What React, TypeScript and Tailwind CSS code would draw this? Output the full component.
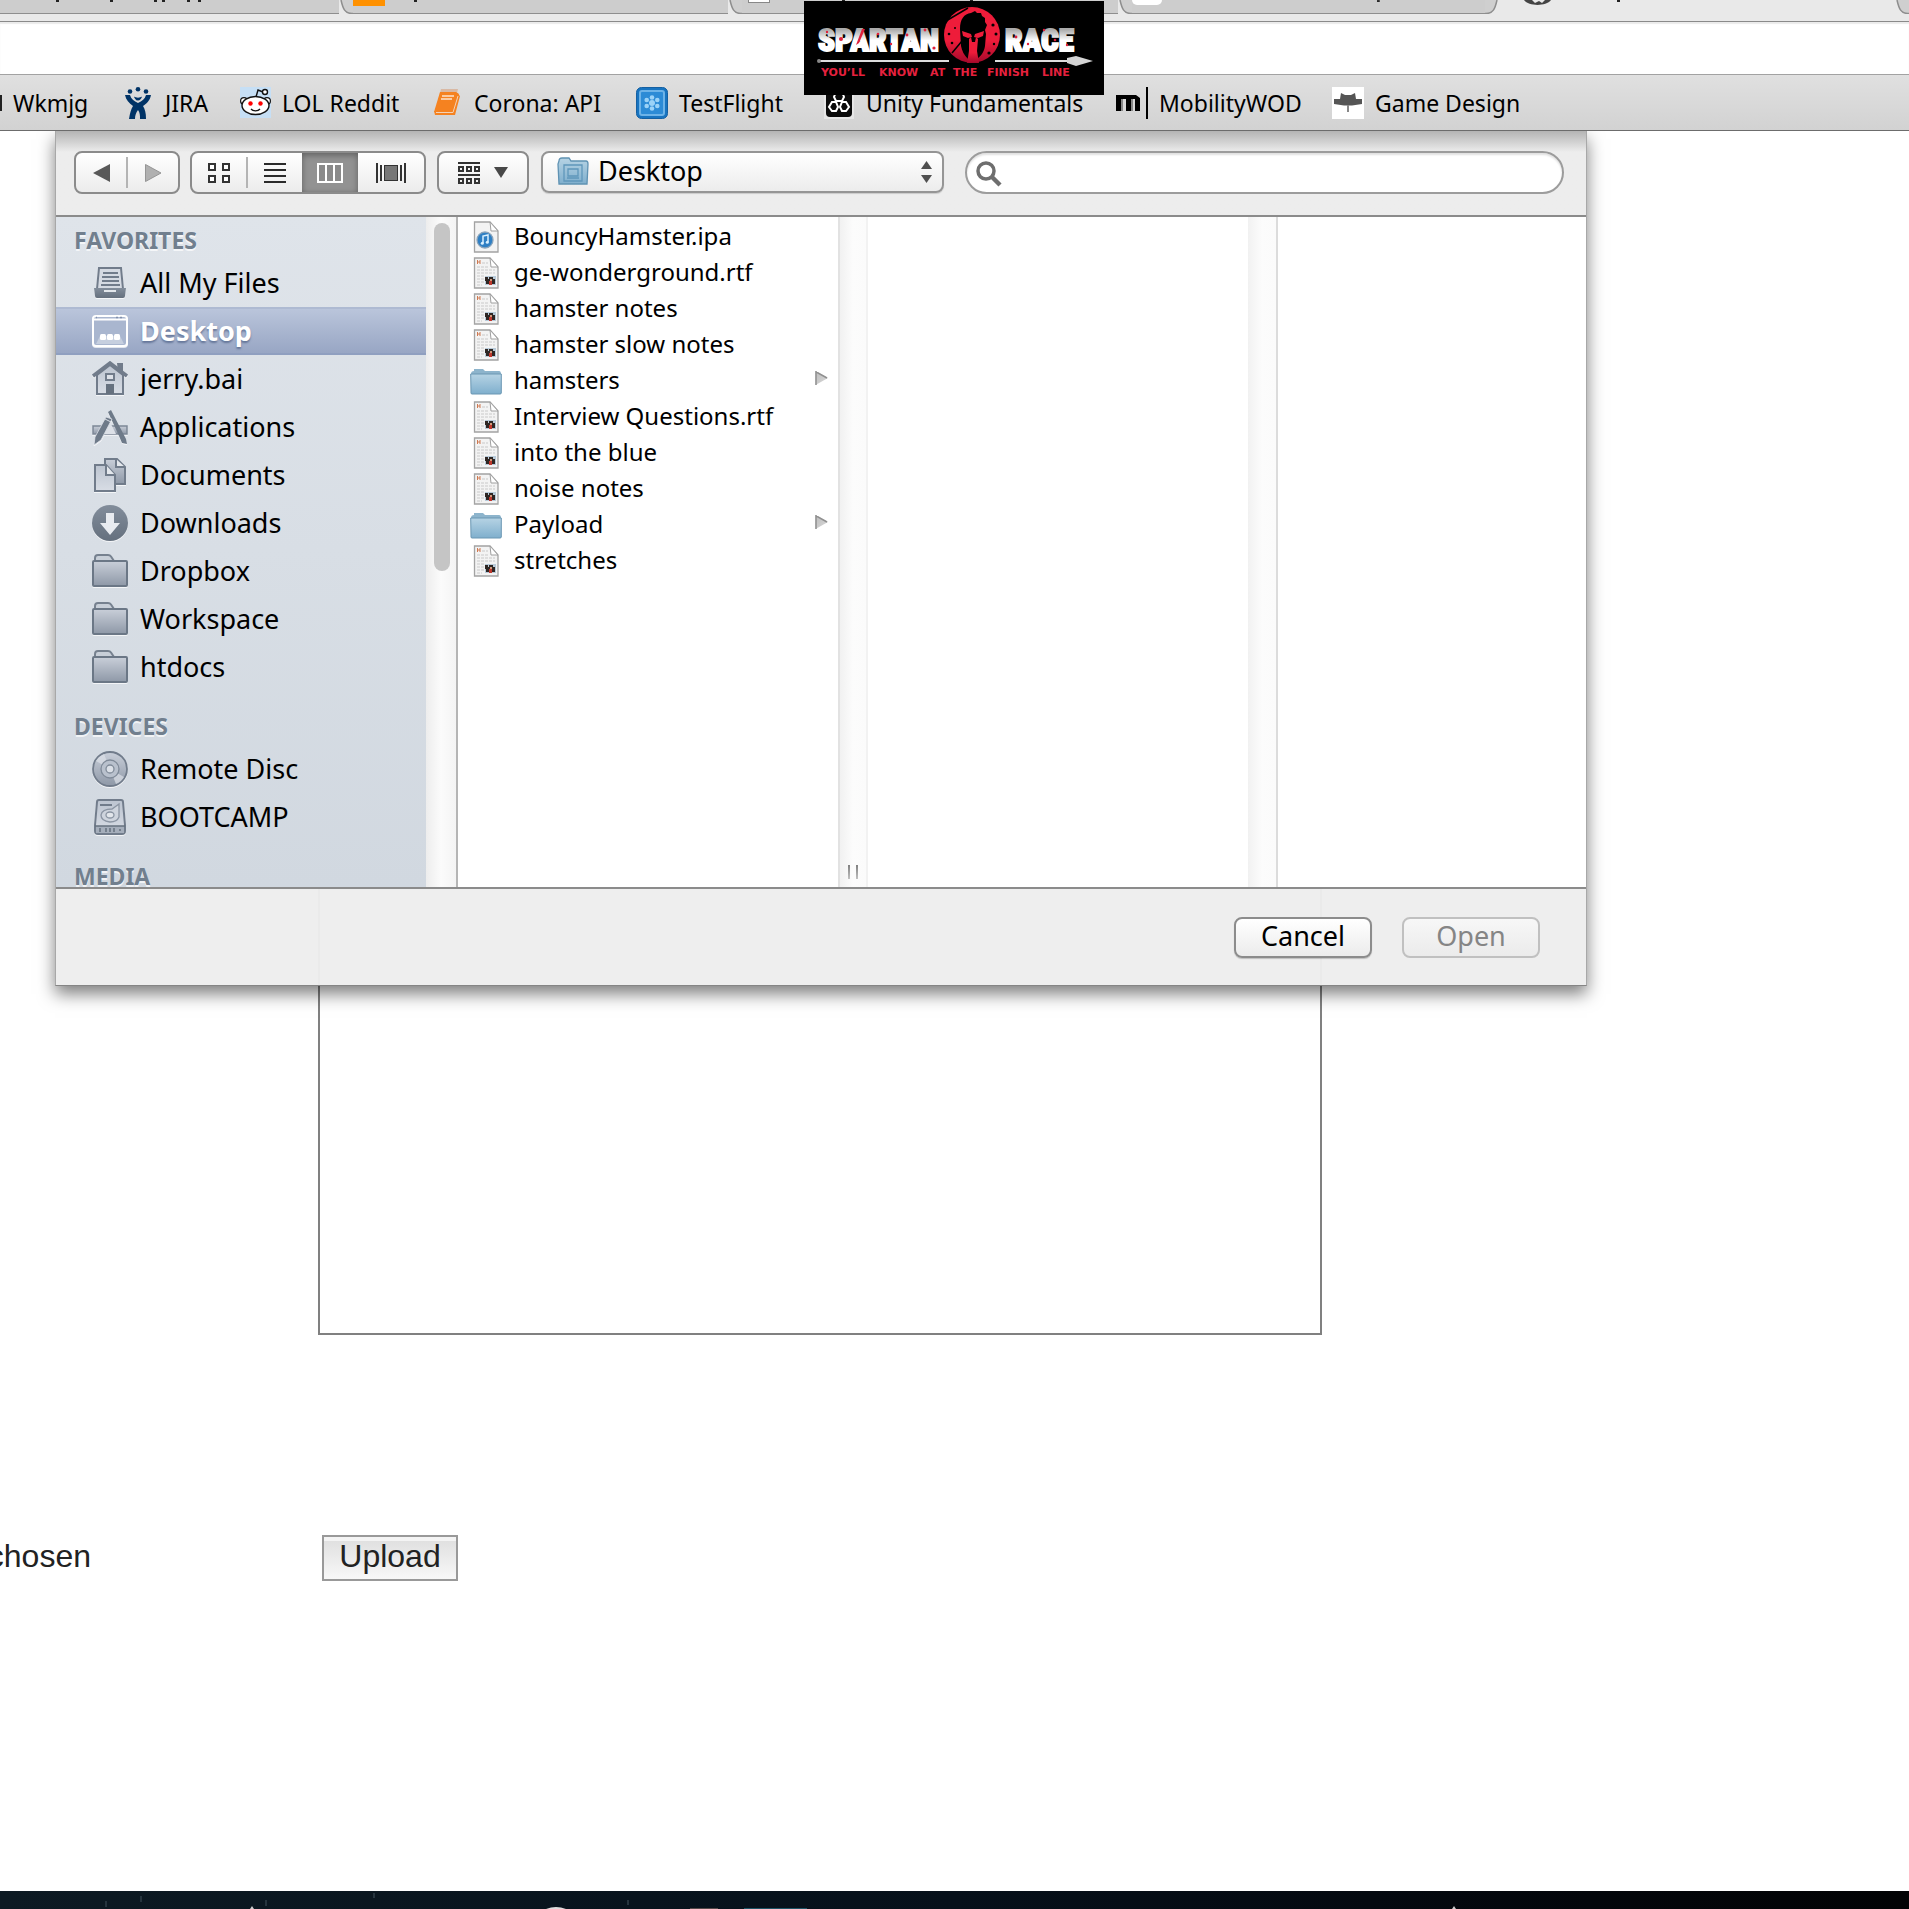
import type { ReactNode } from "react";

const UI = "font-['Noto_Sans','Open_Sans',sans-serif]";

/* ---------- Browser tabs ---------- */

function TabEdge({ flip }: { flip?: boolean }) {
  return (
    <svg width="14" height="14" viewBox="0 0 14 14" className={flip ? "shrink-0 -scale-x-100" : "shrink-0"}>
      <path d="M0 0H14V14H13C6 14 4 9 2 0Z" fill="#cfcfcf" />
      <path d="M2 0C4 9 6 13.500 13 13.500H14" fill="none" stroke="#8e8e8e" strokeWidth="1.500" />
    </svg>
  );
}

function Descenders({ marks }: { marks: number[] }) {
  return (
    <svg width="280" height="3" viewBox="0 0 280 3" className="min-w-0 shrink">
      {marks.map((x) => (
        <rect key={x} x={x} y="0" width="3" height="2" fill="#222" />
      ))}
    </svg>
  );
}

function TabStrip() {
  return (
    <div className="h-[22px] border-b border-[#8a8a8a] bg-[#e9e9e9] overflow-hidden">
      <div className="flex h-3.5 items-start">
        <div className="flex h-3.5 w-[340px] items-start border-b border-[#8e8e8e] bg-[#cdcdcd] pl-[52px]">
          <Descenders marks={[4, 58, 102, 110, 135, 146]} />
        </div>
        <TabEdge />
        <div className="flex h-3.5 w-[377px] items-start gap-[29px] border-b border-[#8e8e8e] bg-[#cdcdcd]">
          <span className="h-1.5 w-8 bg-[#ff9100]" />
          <Descenders marks={[0]} />
        </div>
        <TabEdge />
        <div className="flex h-3.5 w-[377px] items-start gap-16 border-b border-[#8e8e8e] bg-[#cdcdcd] pl-1.5">
          <span className="h-[3px] w-[22px] border border-t-0 border-[#888] bg-white" />
          <Descenders marks={[8, 136]} />
        </div>
        <TabEdge />
        <div className="flex h-3.5 w-[353px] items-start gap-16 border-b border-[#8e8e8e] bg-[#cdcdcd]">
          <span className="h-[5px] w-8 rounded-b-md bg-white" />
          <Descenders marks={[163]} />
        </div>
        <TabEdge flip />
        <div className="flex h-3.5 flex-1 items-start gap-16 pl-[25px]">
          <svg width="27" height="5" viewBox="0 0 27 5" className="shrink-0">
            <path d="M0 0C5 6.500 22 6.500 27 0H21L18 3 15 1 11 3 8 0Z" fill="#444" />
          </svg>
          <Descenders marks={[2]} />
        </div>
        <TabEdge />
      </div>
    </div>
  );
}

/* ---------- Bookmarks ---------- */

const JiraIcon = (
  <svg width="26" height="32" viewBox="0 0 26 32" fill="#003366">
    <circle cx="5" cy="4.500" r="2.300" />
    <circle cx="13" cy="2.300" r="2.300" />
    <circle cx="21" cy="4.500" r="2.300" />
    <path d="M0 8H5C6 12 9 14 13 16C17 14 20 12 21 8H26C25 14 21 17 18 19C20 22 21 26 21 32H15C15 28 15 26 13 23C11 26 10 28 10 32H4C5 26 6 22 8 19C4 16 1 13 0 8Z" />
    <path d="M9 9.500C11 11 15 11 17 9.500C16 13 14 13.500 13 13.500C12 13.500 10 13 9 9.500Z" />
  </svg>
);

const RedditIcon = (
  <svg width="31" height="31" viewBox="0 0 31 31">
    <rect width="31" height="31" fill="#c6dff5" />
    <path d="M16 10L18 3L23 5" fill="none" stroke="#111" strokeWidth="1.400" />
    <circle cx="25" cy="5" r="2.500" fill="#fff" stroke="#111" strokeWidth="1.400" />
    <circle cx="4" cy="14" r="3.400" fill="#fff" stroke="#111" strokeWidth="1.200" />
    <circle cx="27" cy="14" r="3.400" fill="#fff" stroke="#111" strokeWidth="1.200" />
    <ellipse cx="15.500" cy="18.500" rx="13.500" ry="9" fill="#fff" stroke="#111" strokeWidth="1.400" />
    <circle cx="10.500" cy="16.500" r="2.200" fill="#f00" />
    <circle cx="20.500" cy="16.500" r="2.200" fill="#f00" />
    <path d="M11 22C13 24.500 18 24.500 20 22" fill="none" stroke="#111" strokeWidth="1.300" />
  </svg>
);

const BookIcon = (
  <svg width="29" height="29" viewBox="0 0 29 29">
    <path d="M8 1H25L24 5H7Z" fill="#d9b9a4" />
    <path d="M7 4H23L26 6L20 24H1Z" fill="#f58220" />
    <path d="M24 5L27 8L22 27H2L1 23H20Z" fill="#f58220" />
    <path d="M25 8L20 24.500H3" fill="none" stroke="#f3d3b8" strokeWidth="1" />
    <path d="M9 8H21M8 11H19" stroke="#fde3cd" strokeWidth="1.500" />
  </svg>
);

const FlightIcon = (
  <svg width="32" height="32" viewBox="0 0 32 32">
    <rect x="0.500" y="0.500" width="31" height="31" rx="5" fill="#1874c0" stroke="#1560a2" />
    <rect x="4" y="4" width="24" height="24" rx="2" fill="#2c8bd6" stroke="#6db3e8" strokeWidth="2" />
    <g fill="#9bd2f7">
      <circle cx="16" cy="16" r="3" />
      <circle cx="16" cy="10.500" r="2.300" />
      <circle cx="16" cy="21.500" r="2.300" />
      <circle cx="10.700" cy="13" r="2.300" />
      <circle cx="21.300" cy="13" r="2.300" />
      <circle cx="10.700" cy="19" r="2.300" />
      <circle cx="21.300" cy="19" r="2.300" />
    </g>
  </svg>
);

const UnityIcon = (
  <svg width="30" height="32" viewBox="0 0 30 32">
    <rect width="30" height="32" fill="#e6e6e6" />
    <rect x="2" y="1" width="26" height="29" rx="4" fill="#0a0a0a" />
    <g fill="none" stroke="#fff" strokeWidth="2">
      <path d="M12 5H18L20 10L18 14H12L10 10Z" />
      <path d="M8 15H12L14 20L12 24H8L5 20Z" />
      <path d="M18 15H22L25 20L22 24H18L16 20Z" />
    </g>
  </svg>
);

const MobilityIcon = (
  <svg width="32" height="32" viewBox="0 0 32 32">
    <path d="M0 8H20L24 11V24H19V12H15V24H10V12H5V24H0Z" fill="#000" />
    <path d="M5 12H7V24H5ZM15 12H17V24H15Z" fill="#888" />
    <rect x="30" y="0" width="2" height="32" fill="#000" />
  </svg>
);

const GameIcon = (
  <svg width="32" height="32" viewBox="0 0 32 32">
    <rect width="32" height="32" fill="#fff" />
    <path d="M9 6L13 8H19L23 6L24 12H30V17L20 18.500H12L2 17V12H8Z" fill="#555" />
    <rect x="15" y="18" width="2" height="7" fill="#888" />
  </svg>
);

const bookmarks: { label: string; icon: ReactNode; width: string }[] = [
  { label: "JIRA", icon: JiraIcon, width: "w-[117px]" },
  { label: "LOL Reddit", icon: RedditIcon, width: "w-[192px]" },
  { label: "Corona: API", icon: BookIcon, width: "w-[205px]" },
  { label: "TestFlight", icon: FlightIcon, width: "w-[187px]" },
  { label: "Unity Fundamentals", icon: UnityIcon, width: "w-[293px]" },
  { label: "MobilityWOD", icon: MobilityIcon, width: "w-[216px]" },
  { label: "Game Design", icon: GameIcon, width: "w-[200px]" },
];

function BookmarksBar() {
  return (
    <nav
      aria-label="Bookmarks"
      className="flex h-[57px] items-center overflow-hidden border-y border-t-[#a2a2a2] border-b-[#6c6c6c] bg-linear-to-b from-[#e0e0e0] to-[#d2d2d2] text-[23px] leading-8 whitespace-nowrap text-black"
    >
      <a href="#wkmjg" className="flex w-[122px] shrink-0 items-center gap-[11px]">
        <span className="h-4 w-0.5 bg-[#222]" />
        Wkmjg
      </a>
      {bookmarks.map((b) => (
        <a key={b.label} href={"#" + b.label} className={`flex shrink-0 items-center gap-[11px] ${b.width}`}>
          <span className="flex w-8 shrink-0 justify-center">{b.icon}</span>
          {b.label}
        </a>
      ))}
    </nav>
  );
}

/* ---------- Banner ---------- */

function SpartanBanner() {
  return (
    <svg width="300" height="94" viewBox="0 0 300 94" role="img" aria-label="Spartan Race">
      <defs>
        <linearGradient id="steel" x1="0" y1="0" x2="0" y2="1">
          <stop offset="0.200" stopColor="#aaa" />
          <stop offset="0.500" stopColor="#fff" />
        </linearGradient>
        <linearGradient id="blood" x1="0" y1="0" x2="0" y2="1">
          <stop offset="0.600" stopColor="#ee1c3a" />
          <stop offset="1" stopColor="#a3092b" />
        </linearGradient>
      </defs>
      <rect width="300" height="94" fill="#000" />
      <g
        fill="url(#steel)"
        stroke="url(#steel)"
        strokeWidth="2"
        fontFamily="'Liberation Sans Narrow','Roboto Condensed','Liberation Sans',sans-serif"
        fontWeight="900"
        fontSize="31"
      >
        <text x="14" y="50">SPARTAN</text>
        <text x="201" y="50">RACE</text>
      </g>
      <g fill="#e0203c">
        <circle cx="37" cy="38" r="2" />
        <circle cx="23" cy="31" r="1.200" />
        <path d="M52 44L58 28L61 28L55 42Z" />
        <circle cx="74" cy="33" r="1.300" />
        <circle cx="87" cy="43" r="1.200" />
        <circle cx="103" cy="34" r="1.400" />
        <circle cx="121" cy="29" r="1.400" />
        <circle cx="130" cy="47" r="1.600" />
        <circle cx="212" cy="36" r="1.400" />
        <circle cx="224" cy="43" r="1.200" />
        <circle cx="240" cy="29" r="1.200" />
        <circle cx="251" cy="39" r="1.300" />
        <circle cx="263" cy="44" r="1.200" />
      </g>
      <ellipse cx="168" cy="34" rx="28" ry="28" fill="url(#blood)" />
      <path d="M164 7L142 20M148 52L158 40" stroke="#000" strokeWidth="1.500" />
      <path
        d="M167 12L171 10L173 12L177 12L178 15L181 17V21L183 24L181 29L182 33L181 45C180 51 177 55 173 58H164C160 54 158 50 157 45L156 28C156 18 160 13 167 12Z"
        fill="#000"
      />
      <path d="M158 30L167 33L168 36L164 37L159 35ZM180 30L171 33L170 36L174 37L179 35Z" fill="#ee1c3a" />
      <path d="M165 38L167 36L168 41H171L172 36L174 38L173 50L175 62H163L165 50Z" fill="url(#blood)" />
      <g fill="#000">
        <circle cx="145" cy="33" r="1.300" />
        <circle cx="148" cy="42" r="1.300" />
        <circle cx="189" cy="24" r="1.600" />
        <circle cx="192" cy="33" r="1.500" />
        <circle cx="190" cy="43" r="1.200" />
        <circle cx="185" cy="52" r="1.600" />
        <circle cx="151" cy="27" r="1" />
      </g>
      <path d="M15 60H145M191 60H266" stroke="#ddd" strokeWidth="2" />
      <circle cx="15" cy="60" r="2" fill="#888" />
      <path d="M263 57L272 55L289 60L272 65L263 62Z" fill="#d4d4d4" />
      <g fill="#e5213e" fontFamily="'DejaVu Sans',sans-serif" fontWeight="700" fontSize="11">
        <text x="17" y="75">YOU’LL</text>
        <text x="75" y="75">KNOW</text>
        <text x="126" y="75">AT</text>
        <text x="149" y="75">THE</text>
        <text x="183" y="75">FINISH</text>
        <text x="238" y="75">LINE</text>
      </g>
    </svg>
  );
}

/* ---------- Sidebar icons ---------- */

const shades = (
  <defs>
    <linearGradient id="slate" x1="0" y1="0" x2="0" y2="1">
      <stop offset="0" stopColor="#c9cfd9" />
      <stop offset="1" stopColor="#8e98a7" />
    </linearGradient>
    <linearGradient id="pale" x1="0" y1="0" x2="0" y2="1">
      <stop offset="0" stopColor="#bcc4d0" />
      <stop offset="1" stopColor="#d8dde5" />
    </linearGradient>
    <linearGradient id="dark" x1="0" y1="0" x2="0" y2="1">
      <stop offset="0" stopColor="#828d9b" />
      <stop offset="1" stopColor="#65707e" />
    </linearGradient>
    <linearGradient id="sky" x1="0" y1="0" x2="0" y2="1">
      <stop offset="0" stopColor="#b6d3e4" />
      <stop offset="1" stopColor="#7fafcd" />
    </linearGradient>
    <linearGradient id="tri" x1="0" y1="0" x2="1" y2="1">
      <stop offset="0" stopColor="#bdbdbd" />
      <stop offset="1" stopColor="#d8d8d8" />
    </linearGradient>
  </defs>
);

function SideSvg({ children }: { children: ReactNode }) {
  return (
    <svg width="36" height="36" viewBox="0 0 36 36" className="shrink-0 drop-shadow-[0_1px_0_rgba(255,255,255,0.7)]">
      {children}
    </svg>
  );
}

const AllFiles = (
  <SideSvg>
    <path d="M7 3H29L31 24H5Z" fill="#d5dae2" stroke="#717c8b" strokeWidth="2" />
    <path d="M11 8H26M10 12H27M10 16H27M9 20H28" stroke="#717c8b" strokeWidth="2" />
    <path d="M2 23H34L33 31Q33 33 31 33H5Q3 33 3 31Z" fill="url(#dark)" />
    <rect x="12" y="25" width="12" height="2" fill="#e3e7ec" />
  </SideSvg>
);
const DesktopI = (
  <SideSvg>
    <rect x="1" y="3" width="34" height="30" rx="3" fill="#a9b6cf" stroke="#fff" strokeWidth="2" />
    <path d="M2 6.500H34" stroke="#fff" strokeWidth="2" />
    <path d="M24 4.500H26M28 4.500H30M4 4.500H5" stroke="#8090ab" strokeWidth="1.500" />
    <path d="M8 23H28L32 31H4Z" fill="#c6cfdf" />
    <g fill="#fff">
      <rect x="8" y="21" width="6" height="6" rx="1.500" />
      <rect x="15" y="21" width="6" height="6" rx="1.500" />
      <rect x="22" y="21" width="6" height="6" rx="1.500" />
    </g>
  </SideSvg>
);
const HomeI = (
  <SideSvg>
    <path d="M25 2H31V12H26Z" fill="#717c8b" />
    <path d="M5 14L18 4L31 14V33H5Z" fill="url(#pale)" stroke="#717c8b" strokeWidth="2" />
    <path d="M1 15L18 2L35 15" fill="none" stroke="#717c8b" strokeWidth="3.500" />
    <rect x="14" y="13" width="8" height="6" fill="#dde1e8" stroke="#717c8b" strokeWidth="2" />
    <rect x="14" y="23" width="8" height="10" fill="#66717f" />
  </SideSvg>
);
const AppsI = (
  <SideSvg>
    <rect x="1" y="17" width="34" height="8" fill="url(#slate)" stroke="#7c8796" strokeWidth="1.500" />
    <path d="M12 25L18 13L24 25Z" fill="#dce0e7" />
    <path d="M16 3L19 1L34 30L35 35L30 34L27 27Z" fill="#6e7a89" />
    <path d="M14 8L20 10L9 31L2 36L3 28Z" fill="#6e7a89" stroke="#dce0e7" strokeWidth="0.800" />
    <path d="M13 10L19 13" stroke="#dce0e7" />
  </SideSvg>
);
const DocsI = (
  <SideSvg>
    <path d="M13 2H25L33 10V27H13Z" fill="url(#slate)" stroke="#717c8b" strokeWidth="2" />
    <path d="M24 2V10H33" fill="#e4e8ed" stroke="#717c8b" strokeWidth="2" />
    <path d="M3 8H14L23 18V34H3Z" fill="url(#pale)" stroke="#717c8b" strokeWidth="2" />
    <path d="M14 8V18H23" fill="#e4e8ed" stroke="#717c8b" strokeWidth="2" />
  </SideSvg>
);
const DownI = (
  <SideSvg>
    <circle cx="18" cy="18" r="18" fill="url(#dark)" />
    <path d="M14 8H22V18H28L18 30L8 18H14Z" fill="#e8ebf0" />
  </SideSvg>
);
const FolderI = (
  <SideSvg>
    <path d="M3 9V5Q3 2 6 2H16Q18 2 19 3.500L22 8" fill="#c8cfd8" stroke="#76818f" strokeWidth="2" />
    <rect x="1" y="8" width="34" height="25" rx="1" fill="url(#slate)" stroke="#6b7786" strokeWidth="2" />
  </SideSvg>
);
const DiscI = (
  <SideSvg>
    <circle cx="18" cy="18" r="17" fill="url(#slate)" stroke="#717c8b" strokeWidth="1.800" />
    <path d="M18 18L4 10A16 16 0 0 1 12 3ZM18 18L32 26A16 16 0 0 1 24 33Z" fill="#dde1e8" opacity="0.700" />
    <circle cx="18" cy="18" r="9" fill="#b9c1cd" stroke="#808b99" strokeWidth="1.300" />
    <circle cx="18" cy="18" r="4" fill="#dbe0e7" stroke="#808b99" strokeWidth="1.300" />
  </SideSvg>
);
const DriveI = (
  <SideSvg>
    <path d="M7 1H29Q31 1 31 3L33 26V32Q33 35 30 35H6Q3 35 3 32V26L5 3Q5 1 7 1Z" fill="url(#pale)" stroke="#717c8b" strokeWidth="2" />
    <path d="M8 6H20" stroke="#717c8b" strokeWidth="2" />
    <path d="M27 5V18Q25 23 18 23Q9 22 9 16Q10 10 20 10Z" fill="#ced4dd" stroke="#8b95a3" strokeWidth="1.300" />
    <ellipse cx="18" cy="16" rx="4" ry="3" fill="#e2e6eb" stroke="#8b95a3" strokeWidth="1.300" />
    <rect x="4" y="27" width="28" height="7" fill="#a5aebb" />
    <path d="M3 27H33M8 29V33M14 29V33M18 29V33M22 29V33M28 30V32" stroke="#66717f" strokeWidth="1.500" />
  </SideSvg>
);

type Place = { label: string; icon: ReactNode; selected?: boolean };
const favorites: Place[] = [
  { label: "All My Files", icon: AllFiles },
  { label: "Desktop", icon: DesktopI, selected: true },
  { label: "jerry.bai", icon: HomeI },
  { label: "Applications", icon: AppsI },
  { label: "Documents", icon: DocsI },
  { label: "Downloads", icon: DownI },
  { label: "Dropbox", icon: FolderI },
  { label: "Workspace", icon: FolderI },
  { label: "htdocs", icon: FolderI },
];
const devices: Place[] = [
  { label: "Remote Disc", icon: DiscI },
  { label: "BOOTCAMP", icon: DriveI },
];

function PlaceGroup({ title, places }: { title: string; places: Place[] }) {
  return (
    <section className="mb-3 shrink-0">
      <h2 className="h-[42px] pt-[7px] pl-[18px] text-[23px] leading-8 font-bold text-[#717f8e] [text-shadow:0_2px_0_rgba(255,255,255,0.7)]">
        {title}
      </h2>
      <ul>
        {places.map((p) => (
          <li key={p.label}>
            <a
              href={"#" + p.label}
              className={
                p.selected
                  ? "flex h-12 items-center gap-3 border-t-2 border-b-2 border-t-[#aebad2] border-b-[#8f9fc0] bg-linear-to-b from-[#bac5db] to-[#98a6c4] pl-9 font-bold text-white [text-shadow:0_2px_2px_rgba(60,80,120,0.6)]"
                  : "flex h-12 items-center gap-3 pl-9 text-black"
              }
            >
              {p.icon}
              <span className="text-[27px] leading-9">{p.label}</span>
            </a>
          </li>
        ))}
      </ul>
    </section>
  );
}

/* ---------- File icons ---------- */

function PageShape({ children }: { children: ReactNode }) {
  return (
    <svg width="32" height="32" viewBox="0 0 32 32" className="shrink-0">
      <path d="M4.500 1H20L28 10V31H4.500Z" fill="#f3f3f3" stroke="#a3a3a3" strokeWidth="1.300" />
      {children}
      <path d="M20 1L21 10H28Z" fill="#fff" stroke="#a0a0a0" strokeWidth="1" />
    </svg>
  );
}
const IpaIcon = (
  <PageShape>
    <circle cx="15" cy="19" r="8" fill="#2e7fc4" stroke="#8aa4bb" strokeWidth="1.300" />
    <path d="M13 22V15L18 14V21" fill="none" stroke="#d8f0ff" strokeWidth="1.500" />
    <circle cx="12.300" cy="22.300" r="1.500" fill="#d8f0ff" />
    <circle cx="17.300" cy="21.300" r="1.500" fill="#d8f0ff" />
  </PageShape>
);
const RtfIcon = (
  <PageShape>
    <path d="M7.500 3V7M10 3V7M7.500 5H10" stroke="#cf7a52" strokeWidth="1" />
    <path d="M12 6H18M7 10H18M7 13H25M7 16H25M7 19H14M7 22H14M7 25H14M7 28H12" stroke="#c9c9c9" strokeWidth="1" strokeDasharray="3 1" />
    <rect x="15" y="19" width="11" height="9" fill="#b9cbd9" />
    <path d="M15 20H18V22H19V20H23V22H25V27H22V25H19V27H16V24H15Z" fill="#2f2724" />
    <rect x="19" y="24" width="3" height="4" fill="#c0392e" />
    <rect x="20" y="22" width="2" height="2" fill="#d39a7c" />
  </PageShape>
);
const BlueFolder = (
  <svg width="32" height="32" viewBox="0 0 32 32" className="shrink-0">
    <path d="M1 9Q1 6 4 6V4H13L15 6H29Q31 6 31 9V28Q31 29 30 29H2Q1 29 1 28Z" fill="#8db4cc" />
    <path d="M0.700 9H31.300V28Q31.300 29 30 29H2Q1 29 1 28Z" fill="url(#sky)" stroke="#6b97b3" strokeWidth="1" />
  </svg>
);

const files: { name: string; kind: "ipa" | "rtf" | "folder" }[] = [
  { name: "BouncyHamster.ipa", kind: "ipa" },
  { name: "ge-wonderground.rtf", kind: "rtf" },
  { name: "hamster notes", kind: "rtf" },
  { name: "hamster slow notes", kind: "rtf" },
  { name: "hamsters", kind: "folder" },
  { name: "Interview Questions.rtf", kind: "rtf" },
  { name: "into the blue", kind: "rtf" },
  { name: "noise notes", kind: "rtf" },
  { name: "Payload", kind: "folder" },
  { name: "stretches", kind: "rtf" },
];
const kindIcon = { ipa: IpaIcon, rtf: RtfIcon, folder: BlueFolder };

/* ---------- Dialog ---------- */

const segment = "flex h-full items-center justify-center";
const group =
  "flex h-[43px] shrink-0 items-stretch overflow-hidden rounded-lg border-2 border-[#8b8b8b] bg-linear-to-b from-white to-[#ececec]";

function Toolbar() {
  return (
    <div className="flex h-[84px] items-start bg-linear-to-b from-[#b4b4b4] via-[#ededed] via-25% to-[#ededed] pt-5 pr-[22px] pl-[18px]">
      <div className={`${group} w-[106px]`}>
        <button aria-label="Back" className={`${segment} w-[50px]`}>
          <svg width="17" height="18" viewBox="0 0 17 18"><path d="M17 0V18L0 9Z" fill="#585858" /></svg>
        </button>
        <span className="my-1 w-0.5 bg-[#b4b4b4]" />
        <button aria-label="Forward" className={`${segment} w-[50px]`}>
          <svg width="17" height="18" viewBox="0 0 17 18"><path d="M0.500 0.500V17.500L16 9Z" fill="#b0b0b0" stroke="#959595" /></svg>
        </button>
      </div>
      <div className={`${group} ml-2.5 w-[236px]`}>
        <button aria-label="Icon view" className={`${segment} w-[54px]`}>
          <svg width="22" height="20" viewBox="0 0 22 20" fill="#fff" stroke="#333" strokeWidth="2">
            <path d="M1 1H7V7H1ZM15 1H21V7H15ZM1 13H7V19H1ZM15 13H21V19H15Z" />
          </svg>
        </button>
        <span className="my-1 w-0.5 bg-[#b4b4b4]" />
        <button aria-label="List view" className={`${segment} w-[54px]`}>
          <svg width="22" height="20" viewBox="0 0 22 20" stroke="#2b2b2b" strokeWidth="2"><path d="M0 1H22M0 7H22M0 13H22M0 19H22" /></svg>
        </button>
        <button aria-label="Column view" aria-pressed="true" className={`${segment} w-14 bg-[#929292] shadow-[inset_0_2px_6px_rgba(0,0,0,0.35)]`}>
          <svg width="26" height="20" viewBox="0 0 26 20"><path d="M1 1H25V19H1ZM9 1V19M17 1V19" fill="#8a8a8a" stroke="#fff" strokeWidth="2" /></svg>
        </button>
        <button aria-label="Cover flow view" className={`${segment} flex-1`}>
          <svg width="30" height="20" viewBox="0 0 30 20" stroke="#333" strokeWidth="2">
            <path d="M1 0V20M5 2V18M25 2V18M29 0V20" /><rect x="8.500" y="2.500" width="13" height="15" fill="#777" strokeWidth="1" />
          </svg>
        </button>
      </div>
      <button aria-label="Arrange" className={`${group} ml-[11px] w-[92px] !items-center justify-center gap-3.5`}>
        <svg width="22" height="22" viewBox="0 0 22 22" fill="none" stroke="#333" strokeWidth="2">
          <path d="M0 1H22M0 13H22" />
          <path d="M1 5H5V9H1ZM9 5H13V9H9ZM17 5H21V9H17ZM1 17H5V21H1ZM9 17H13V21H9ZM17 17H21V21H17Z" />
        </svg>
        <svg width="14" height="11" viewBox="0 0 14 11"><path d="M0 0H14L7 11Z" fill="#484848" /></svg>
      </button>
      <div className="relative ml-3 w-[403px] shrink-0">
        <select
          aria-label="Location"
          defaultValue="Desktop"
          className="h-[42px] w-full appearance-none rounded-lg border-2 border-[#959595] bg-linear-to-b from-white to-[#ececec] pb-0.5 pl-[55px] text-[27px] leading-8 text-black shadow-[0_1px_1px_rgba(0,0,0,0.15)]"
        >
          <option>Desktop</option>
        </select>
        <svg width="32" height="28" viewBox="0 0 32 28" className="pointer-events-none absolute top-1.5 left-4">
          <path d="M2 4Q2 1 5 1H12L14 4H29Q31 4 31 7L30 27H2L1 7Z" fill="url(#sky)" stroke="#5f92b3" strokeWidth="1.300" />
          <path d="M7 8H25V24H7ZM11 12H21V19H11ZM10 21H22" fill="none" stroke="#5f97bb" strokeWidth="1.300" />
        </svg>
        <svg width="11" height="22" viewBox="0 0 11 22" className="pointer-events-none absolute top-2.5 right-3">
          <path d="M5.500 0L11 8H0ZM5.500 22L11 14H0Z" fill="#505050" />
        </svg>
      </div>
      <div className="relative ml-[21px] min-w-0 flex-1">
        <input
          type="search"
          aria-label="Search"
          className="h-[43px] w-full rounded-full border-2 border-[#9c9c9c] bg-white pr-5 pl-11 text-2xl shadow-[inset_0_2px_2px_rgba(0,0,0,0.12)]"
        />
        <svg width="26" height="26" viewBox="0 0 26 26" className="pointer-events-none absolute top-[10px] left-[11px]" fill="none" stroke="#6e6e6e">
          <circle cx="10" cy="10" r="8" strokeWidth="3.500" />
          <path d="M16 16L24 24" strokeWidth="4.500" />
        </svg>
      </div>
    </div>
  );
}

const gutter = "flex w-[30px] shrink-0 justify-center bg-linear-to-r from-[#f1f1f1] via-[#fcfcfc] to-[#fbfbfb]";

function Browser() {
  return (
    <div className="flex h-[674px] border-y-2 border-[#8b8b8b] bg-white">
      <aside className="flex w-[370px] shrink-0 flex-col overflow-hidden bg-linear-to-b from-[#dfe4ea] to-[#d1d8e0]">
        <PlaceGroup title="FAVORITES" places={favorites} />
        <PlaceGroup title="DEVICES" places={devices} />
        <PlaceGroup title="MEDIA" places={[]} />
      </aside>
      <div className="w-8 shrink-0 border-r-2 border-[#b5b5b5] bg-linear-to-r from-[#ededed] via-[#fbfbfb] to-[#f4f4f4] pt-1.5 pl-2">
        <div className="h-[348px] w-4 rounded-full bg-[#c5c5c5]" />
      </div>
      <ul className="w-[380px] shrink-0 pt-0.5 text-2xl leading-8 text-black">
        {files.map((f) => (
          <li key={f.name} className="flex h-9 items-center pr-2.5 pl-3">
            <span className="flex w-8 pb-px">{kindIcon[f.kind]}</span>
            <span className="ml-3 flex-1 pb-0.5 whitespace-nowrap">{f.name}</span>
            {f.kind === "folder" && (
              <svg width="13" height="14" viewBox="0 0 13 14" className="mb-1.5">
                <path d="M0.500 0V14L13 7Z" fill="url(#tri)" />
                <path d="M1 0V14M0.500 0.500L12 7" stroke="#909090" strokeWidth="1.500" fill="none" />
              </svg>
            )}
          </li>
        ))}
      </ul>
      <div className={`${gutter} items-end gap-1.5 border-x-2 border-l-[#e2e2e2] border-r-[#f2f2f2] pb-2`}>
        <span className="h-3.5 w-0.5 bg-linear-to-b from-[#808080] to-[#c0c0c0]" />
        <span className="h-3.5 w-0.5 bg-linear-to-b from-[#808080] to-[#c0c0c0]" />
      </div>
      <div className="w-[380px] shrink-0" />
      <div className={`${gutter} border-r-2 border-[#dcdcdc]`} />
      <div className="min-w-0 flex-1" />
    </div>
  );
}

const push = "h-[41px] w-[138px] rounded-lg border-2 pb-1 text-[27px] leading-8";

function OpenDialog() {
  return (
    <section
      role="dialog"
      aria-label="Open file"
      className={`${UI} border-x border-b border-[#a8a8a8] border-b-[#858585] shadow-[0_8px_16px_rgba(0,0,0,0.5)]`}
    >
      <Toolbar />
      <Browser />
      <footer className="flex h-24 items-start justify-end gap-[30px] bg-[#ededed]/97 pt-7 pr-[46px]">
        <button className={`${push} border-[#8c8c8c] bg-linear-to-b from-white to-[#ececec] text-black shadow-[0_1px_1px_rgba(0,0,0,0.2)]`}>
          Cancel
        </button>
        <button disabled className={`${push} border-[#c0c0c0] bg-linear-to-b from-[#f7f7f7] to-[#ebebeb] text-[#858585]`}>
          Open
        </button>
      </footer>
    </section>
  );
}

export default function App() {
  return (
    <div className="flex min-h-screen flex-col overflow-hidden bg-white">
      <header className={`${UI} relative z-10`}>
        <TabStrip />
        <div className="h-[52px] bg-white shadow-[inset_0_2px_1px_rgba(0,0,0,0.08)]" />
        <BookmarksBar />
        <div className="absolute top-px left-[804px]">
          <SpartanBanner />
        </div>
      </header>
      <svg width="0" height="0" className="absolute">{shades}</svg>
      <main className="relative flex-1 font-['Liberation_Sans',Arial,sans-serif]">
        <div className="absolute top-0 right-[322px] left-[55px]">
          <OpenDialog />
        </div>
        <div className="mt-[200px] mr-[587px] ml-[318px] h-[1004px] border-2 border-[#808080]" />
        <form className="mt-[200px] flex items-center gap-[231px] text-[32px] leading-9 text-[#222]">
          <span className="-ml-4 w-[107px] pb-1 text-right whitespace-nowrap">chosen</span>
          <button
            type="button"
            className="h-[46px] w-[136px] border-2 border-[#999] bg-linear-to-b from-[#dedede] to-[#f8f8f8] pb-1 shadow-[inset_0_4px_0_#f4f4f4]"
          >
            Upload
          </button>
        </form>
      </main>
      <footer className="flex h-[18px] items-end bg-linear-to-r from-[#0d1a23] via-[#06101a] to-[#020305]">
        <svg width="1500" height="18" viewBox="0 0 1500 18">
          <g fill="#26343e">
            <rect x="105" y="10" width="2" height="6" />
            <rect x="140" y="5" width="2" height="6" />
            <rect x="265" y="9" width="2" height="6" />
            <rect x="373" y="2" width="2" height="5" />
            <rect x="627" y="9" width="2" height="5" />
          </g>
          <path d="M250 18L252 15L254 18ZM1452 18L1454 15L1456 18Z" fill="#ccc" />
          <path d="M546 18Q556 14 566 18Z" fill="#ddd" />
          <rect x="690" y="17" width="28" height="1" fill="#55494a" />
          <rect x="744" y="17" width="63" height="1" fill="#1d5466" />
        </svg>
      </footer>
    </div>
  );
}
